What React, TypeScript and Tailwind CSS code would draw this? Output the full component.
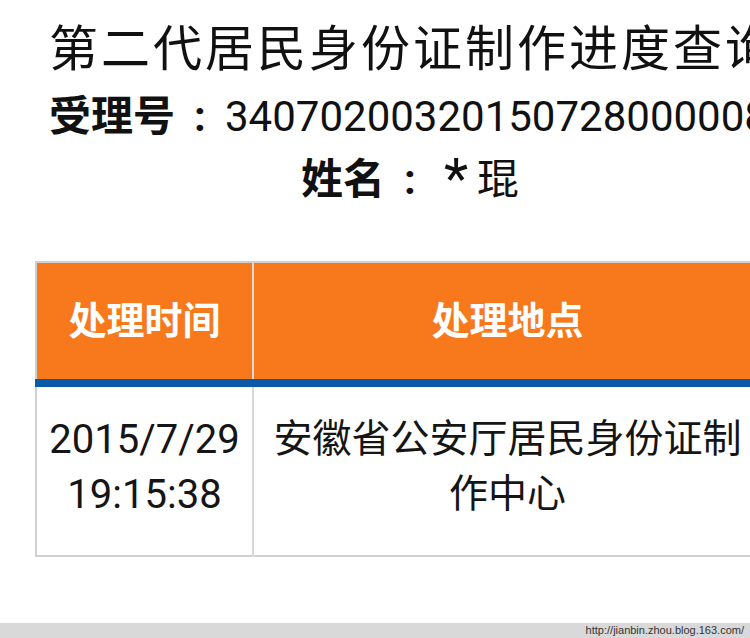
const FONT = "font-['Roboto','Noto_Sans_CJK_SC',sans-serif]";

export default function App() {
  return (
    <div className={`w-[750px] h-[638px] overflow-hidden flex flex-col bg-white text-[#111] ${FONT}`}>
      <div className="flex-1 w-[820px] pt-[20px]">
        <h1 className="h-[60px] pl-[49px] whitespace-nowrap text-[49px] leading-[60px] tracking-[3px] font-normal">
          第二代居民身份证制作进度查询
        </h1>
        <p className="h-[56px] pl-[49px] mt-[9px] whitespace-nowrap text-[42px] leading-[56px]">
          <span className="font-bold">受理号</span>
          <span className="inline-block w-[50px] text-center font-bold">:</span>
          34070200320150728000008
        </p>
        <p className="h-[56px] mt-[2px] text-center whitespace-nowrap text-[42px] leading-[56px]">
          <span className="font-bold">姓名</span>
          <span className="inline-block w-[50px] text-center font-bold">:</span>
          <span className="inline-block w-[42px] text-center relative top-[4px] text-[56px]">*</span>
          琨
        </p>

        <table className="ml-[35px] mt-[58px] w-[728px] border-2 border-[#d0d0d0] border-collapse table-fixed">
          <thead>
            <tr className="bg-[#f7791b] text-white text-[38px] font-bold">
              <th className="w-[217px] h-[121px] border-b-[8px] border-b-[#0b5aa7] border-r-2 border-r-[#d8d8d8] font-bold">
                处理时间
              </th>
              <th className="h-[121px] border-b-[8px] border-b-[#0b5aa7] font-bold">处理地点</th>
            </tr>
          </thead>
          <tbody>
            <tr className="text-[39px] leading-[55px] text-[#151515]">
              <td className="h-[173px] text-center text-[40px] border-r-2 border-r-[#d8d8d8] pb-[8px]">
                2015/7/29
                <br />
                19:15:38
              </td>
              <td className="h-[173px] text-center px-[10px] pb-[8px]">安徽省公安厅居民身份证制作中心</td>
            </tr>
          </tbody>
        </table>
      </div>
      <div className="h-[15px] bg-[#d9d9d9] flex items-center justify-end pr-[6px]">
        <span className="font-['Liberation_Sans',sans-serif] text-[11px] leading-[15px] text-[#333]">
          http://jianbin.zhou.blog.163.com/
        </span>
      </div>
    </div>
  );
}
